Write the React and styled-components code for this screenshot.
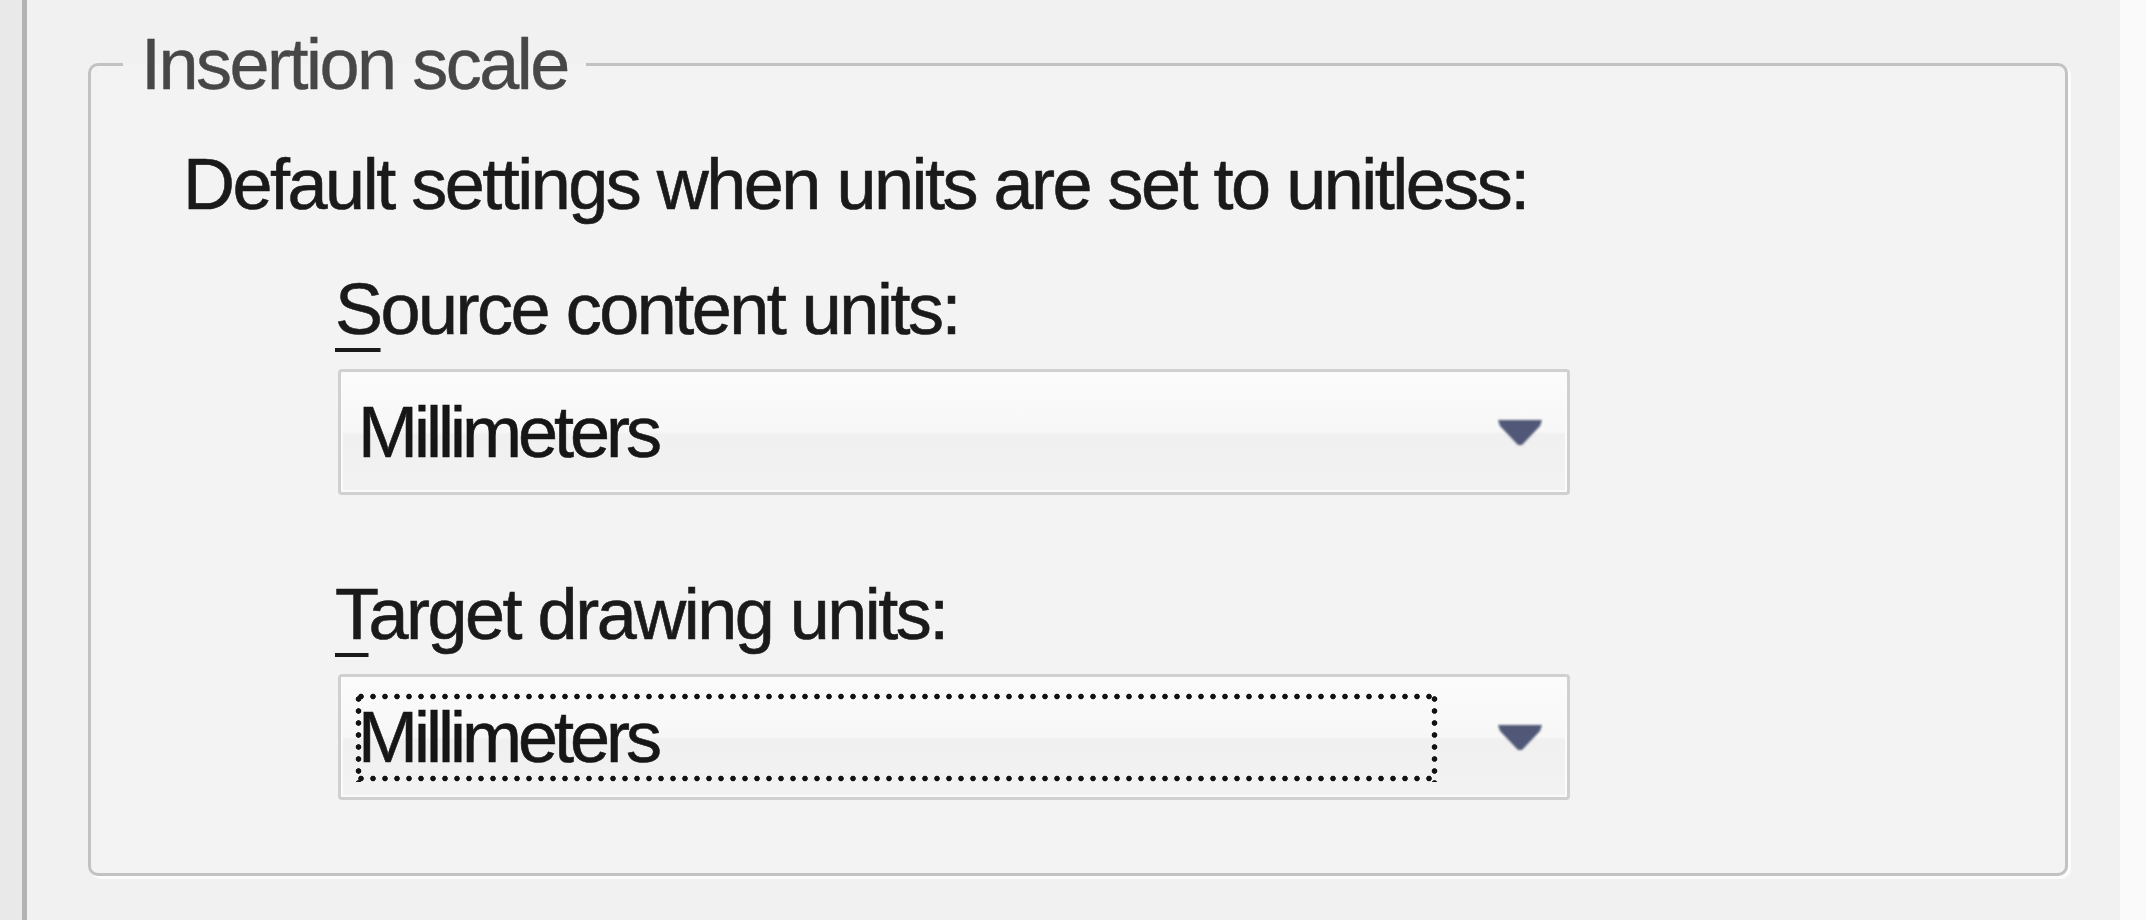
import React from "react";
import styled, { createGlobalStyle, css } from "styled-components";

const Global = createGlobalStyle`
  html, body { margin: 0; padding: 0; background: #f0f0f0; }
  body { font-family: "Liberation Sans", Arial, sans-serif; }
`;

const Page = styled.div`
  display: flex;
  width: 2146px;
  height: 920px;
  overflow: hidden;
  background: #f1f1f1;
`;

const LeftEdge = styled.div`
  flex: none;
  width: 22px;
  background: #e9e9e9;
  border-right: 5px solid #b3b3b3;
`;

const Main = styled.div`
  flex: 1;
  padding: 28px 0 0 61px;
`;

const RightEdge = styled.div`
  flex: none;
  width: 26px;
  background: #fafafa;
`;

const GroupBox = styled.fieldset`
  margin: 0;
  padding: 0;
  width: 1980px;
  box-sizing: border-box;
  border: 3px solid #c2c2c2;
  border-radius: 10px;
  box-shadow: 3px 3px 0 #fcfcfc;
  background: #f3f3f3;
`;

const Legend = styled.legend`
  margin-left: 32px;
  padding: 0 18px;
  font-size: 72px;
  line-height: 72px;
  letter-spacing: -2.5px;
  color: #474747;
  -webkit-text-stroke: 0.4px #474747;
`;

const Body = styled.div`
  display: flex;
  flex-direction: column;
  padding: 48px 0 73px 92px;
`;

const Text = styled.div`
  font-size: 72px;
  line-height: 72px;
  letter-spacing: -2.5px;
  color: #1a1a1a;
  -webkit-text-stroke: 0.6px #1a1a1a;
  white-space: nowrap;
`;

const Field = styled.div`
  display: flex;
  flex-direction: column;
  gap: 24px;
  margin-left: 152px;
  margin-top: ${(p) => p.$top}px;
`;

const Key = styled.span`
  text-decoration: underline;
  text-decoration-thickness: 4px;
  text-underline-offset: 14px;
`;

const Combo = styled.div`
  display: flex;
  align-items: center;
  justify-content: space-between;
  margin-left: 3px;
  width: 1232px;
  height: 126px;
  box-sizing: border-box;
  padding: 0 24px 0 14px;
  border: 3px solid #d0d0d0;
  border-radius: 4px;
  box-shadow: inset 0 0 0 2px #fbfbfb;
  background: linear-gradient(
    to bottom,
    #fbfbfb 0%,
    #f7f7f7 50%,
    #f0f0f0 52%,
    #f2f2f2 100%
  );
`;

const dot = "radial-gradient(circle, #121212 2.4px, rgba(18,18,18,0) 3.2px)";

const Value = styled.div`
  display: flex;
  align-items: center;
  width: 1083px;
  height: 89px;
  box-sizing: border-box;
  padding-left: 3px;
  font-size: 72px;
  line-height: 72px;
  letter-spacing: -4px;
  color: #161616;
  -webkit-text-stroke: 0.6px #161616;
  white-space: nowrap;
  ${(p) =>
    p.$focused &&
    css`
      background: ${dot} 0 0 / 12px 7px repeat-x, ${dot} 0 100% / 12px 7px repeat-x,
        ${dot} 0 0 / 7px 12px repeat-y, ${dot} 100% 0 / 7px 12px repeat-y;
    `}
`;

const Arrow = () => (
  <svg width="46" height="30" viewBox="0 0 46 30">
    <defs>
      <filter id="soft" x="-20%" y="-20%" width="140%" height="140%">
        <feGaussianBlur stdDeviation="1.2" />
      </filter>
    </defs>
    <path
      d="M1 3 L45 3 L43 9 L25 28 L21 28 L3 9 Z"
      fill="#515977"
      filter="url(#soft)"
    />
  </svg>
);

const ComboBox = ({ value, focused }) => (
  <Combo>
    <Value $focused={focused}>{value}</Value>
    <Arrow />
  </Combo>
);

export default function App() {
  return (
    <>
      <Global />
      <Page>
        <LeftEdge />
        <Main>
          <GroupBox>
            <Legend>Insertion scale</Legend>
            <Body>
              <Text>Default settings when units are set to unitless:</Text>
              <Field $top={53}>
                <Text>
                  <Key>S</Key>ource content units:
                </Text>
                <ComboBox value="Millimeters" />
              </Field>
              <Field $top={83}>
                <Text>
                  <Key>T</Key>arget drawing units:
                </Text>
                <ComboBox value="Millimeters" focused />
              </Field>
            </Body>
          </GroupBox>
        </Main>
        <RightEdge />
      </Page>
    </>
  );
}
